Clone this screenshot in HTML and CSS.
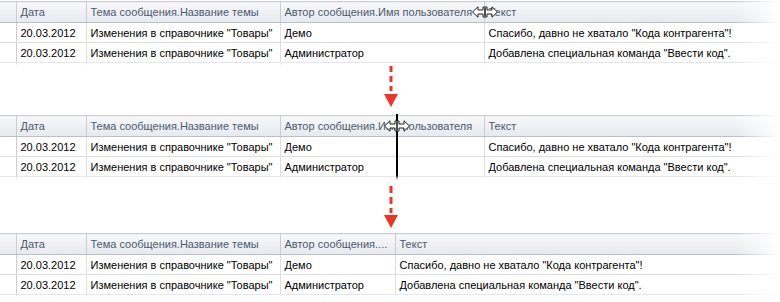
FILE: index.html
```html
<!DOCTYPE html>
<html lang="ru">
<head>
    <meta charset="UTF-8">
    <title>Изменение ширины колонки</title>
    <link rel="stylesheet" href="styles.css">
</head>
<body>
    <div class="page">
        <!-- шаг 1: курсор на границе колонки -->
        <div class="grid-frame">
            <table class="grid">
                <colgroup>
                    <col class="c-ind"><col class="c-date"><col class="c-theme"><col class="c-author"><col>
                </colgroup>
                <thead>
                    <tr><th></th><th>Дата</th><th>Тема сообщения.Название темы</th><th>Автор сообщения.Имя пользователя</th><th>Текст</th></tr>
                </thead>
                <tbody>
                    <tr><td></td><td>20.03.2012</td><td>Изменения в справочнике "Товары"</td><td>Демо</td><td>Спасибо, давно не хватало "Кода контрагента"!</td></tr>
                    <tr><td></td><td>20.03.2012</td><td>Изменения в справочнике "Товары"</td><td>Администратор</td><td>Добавлена специальная команда "Ввести код".</td></tr>
                    <tr class="tail"><td></td><td></td><td></td><td></td><td></td></tr>
                </tbody>
            </table>
            <svg class="cursor cursor-1" width="26" height="12" viewBox="0 0 26 12">
                <path d="M0.5 6 L6 0.8 L6 4 L11 4 L11 1 L15 1 L15 4 L20 4 L20 0.8 L25.5 6 L20 11.2 L20 8 L15 8 L15 11 L11 11 L11 8 L6 8 L6 11.2 Z" fill="#fff" stroke="#222" stroke-width="1"/>
                <path d="M12.5 1.5 V10.5 M13.5 1.5 V10.5" stroke="#222" stroke-width="0.8"/>
            </svg>
            <div class="fade"></div>
        </div>

        <div class="arrow arrow-1">
            <svg width="16" height="42" viewBox="0 0 16 42">
                <path d="M8 0 V6 M8 10 V16 M8 20 V25" stroke="#ee3424" stroke-width="3"/>
                <path d="M1 28 L15 28 L8 41 Z" fill="#ee3424"/>
            </svg>
        </div>

        <!-- шаг 2: перетаскивание границы -->
        <div class="grid-frame">
            <table class="grid">
                <colgroup>
                    <col class="c-ind"><col class="c-date"><col class="c-theme"><col class="c-author"><col>
                </colgroup>
                <thead>
                    <tr><th></th><th>Дата</th><th>Тема сообщения.Название темы</th><th>Автор сообщения.Имя пользователя</th><th>Текст</th></tr>
                </thead>
                <tbody>
                    <tr><td></td><td>20.03.2012</td><td>Изменения в справочнике "Товары"</td><td>Демо</td><td>Спасибо, давно не хватало "Кода контрагента"!</td></tr>
                    <tr><td></td><td>20.03.2012</td><td>Изменения в справочнике "Товары"</td><td>Администратор</td><td>Добавлена специальная команда "Ввести код".</td></tr>
                    <tr class="tail"><td></td><td></td><td></td><td></td><td></td></tr>
                </tbody>
            </table>
            <div class="drag-line"></div>
            <svg class="cursor cursor-2" width="26" height="12" viewBox="0 0 26 12">
                <path d="M0.5 6 L6 0.8 L6 4 L11 4 L11 1 L15 1 L15 4 L20 4 L20 0.8 L25.5 6 L20 11.2 L20 8 L15 8 L15 11 L11 11 L11 8 L6 8 L6 11.2 Z" fill="#fff" stroke="#222" stroke-width="1"/>
                <path d="M12.5 1.5 V10.5 M13.5 1.5 V10.5" stroke="#222" stroke-width="0.8"/>
            </svg>
            <div class="fade"></div>
        </div>

        <div class="arrow arrow-2">
            <svg width="16" height="42" viewBox="0 0 16 42">
                <path d="M8 0 V7 M8 11 V18 M8 22 V27" stroke="#ee3424" stroke-width="3"/>
                <path d="M1 29 L15 29 L8 42 Z" fill="#ee3424"/>
            </svg>
        </div>

        <!-- шаг 3: результат -->
        <div class="grid-frame">
            <table class="grid">
                <colgroup>
                    <col class="c-ind"><col class="c-date"><col class="c-theme"><col class="c-author-narrow"><col>
                </colgroup>
                <thead>
                    <tr><th></th><th>Дата</th><th>Тема сообщения.Название темы</th><th>Автор сообщения....</th><th>Текст</th></tr>
                </thead>
                <tbody>
                    <tr><td></td><td>20.03.2012</td><td>Изменения в справочнике "Товары"</td><td>Демо</td><td>Спасибо, давно не хватало "Кода контрагента"!</td></tr>
                    <tr><td></td><td>20.03.2012</td><td>Изменения в справочнике "Товары"</td><td>Администратор</td><td>Добавлена специальная команда "Ввести код".</td></tr>
                    <tr class="tail"><td></td><td></td><td></td><td></td><td></td></tr>
                </tbody>
            </table>
            <div class="fade"></div>
        </div>
    </div>
</body>
</html>
```

FILE: styles.css
```css
* {
    margin: 0;
    padding: 0;
    box-sizing: border-box;
}

body {
    font-family: Tahoma, 'Liberation Sans', Arial, sans-serif;
    font-size: 11px;
    background-color: #ffffff;
    color: #000000;
    width: 780px;
    height: 302px;
    overflow: hidden;
}

.page {
    display: flex;
    flex-direction: column;
}

.grid-frame {
    position: relative;
    height: 66px;
    padding-top: 1px;
    overflow: hidden;
}

.grid {
    width: 780px;
    table-layout: fixed;
    border-collapse: collapse;
}

.c-ind { width: 16px; }
.c-date { width: 70px; }
.c-theme { width: 194px; }
.c-author { width: 204px; }
.c-author-narrow { width: 115px; }

.grid th,
.grid td {
    text-align: left;
    white-space: nowrap;
    overflow: hidden;
    padding: 0 4px;
    font-weight: normal;
}

.grid th {
    height: 21px;
    color: #4c5a6e;
    background: linear-gradient(#f7f8fa, #e6e9ee);
    border-top: 1px solid #c8cdd6;
    border-bottom: 1px solid #b9c0cb;
    border-left: 1px solid #c8cdd6;
}

.grid th:first-child {
    border-left: none;
    border-right: 1px solid #c8cdd6;
}

.grid td {
    height: 20px;
    border-bottom: 1px solid #dcdee2;
    border-left: 1px solid #dcdee2;
}

.grid td:first-child {
    border-left: none;
    border-right: 1px solid #c8cdd6;
}

.grid .tail td {
    border-bottom: none;
}

.fade {
    position: absolute;
    inset: 0;
    background:
        linear-gradient(to right, rgba(255,255,255,0) 735px, #ffffff 780px),
        linear-gradient(to bottom, rgba(255,255,255,0) 61px, #ffffff 66px);
    pointer-events: none;
}

.arrow {
    display: flex;
    justify-content: flex-start;
    padding-left: 383px;
}

.arrow-1 {
    height: 48px;
}

.arrow-2 {
    height: 52px;
    padding-top: 6px;
}

.drag-line {
    position: absolute;
    left: 396px;
    top: 0;
    width: 2px;
    height: 66px;
    background-color: #000000;
}

.cursor {
    position: absolute;
}

.cursor-1 {
    left: 472px;
    top: 6px;
}

.cursor-2 {
    left: 384px;
    top: 6px;
}
```
